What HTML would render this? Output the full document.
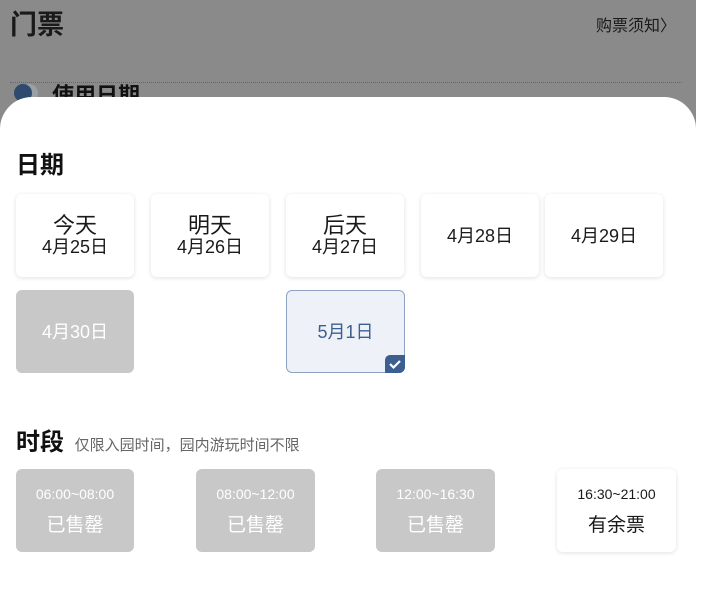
<!DOCTYPE html>
<html><head><meta charset="utf-8"><style>
*{margin:0;padding:0;box-sizing:border-box}
body{width:702px;height:592px;background:#fff;position:relative;overflow:hidden;font-family:"Liberation Sans","Noto Sans CJK SC",sans-serif}
.bg{position:absolute;left:0;top:0;width:696px;height:592px;background:#8a8a8a}
.t1{position:absolute;left:10px;top:3px;font-size:27px;font-weight:bold;color:#1a1a1a}
.t2{position:absolute;left:596px;top:12px;font-size:16px;color:#1a1a1a}
.dash{position:absolute;left:10px;top:82px;width:672px;border-top:1px dotted #5a6a7a}
.dot{position:absolute;left:14px;top:84px;width:18px;height:18px;border-radius:50%;background:#2e4a6e;box-shadow:6px 0 0 #9aa0a6}
.t3{position:absolute;left:52px;top:78px;font-size:22px;font-weight:bold;color:#111}
.sheet{position:absolute;left:0;top:97px;width:696px;height:500px;background:#fff;border-radius:32px 32px 0 0}
.h{position:absolute;left:16px;font-size:24px;font-weight:bold;color:#111}
.c{position:absolute;width:118px;height:83px;border-radius:6px;background:#fff;box-shadow:0 1px 5px rgba(0,0,0,.12);display:flex;flex-direction:column;align-items:center;justify-content:center;color:#1a1a1a;font-size:18px;line-height:20px;text-align:center}
.c .b{font-size:22px;line-height:22px}
.g{background:#c8c8c8;box-shadow:none;color:#fff}
.s{background:#eef2f8;border:1px solid #8ea3c2;color:#3d5f8f;box-shadow:none}
.chk{position:absolute;right:-1px;bottom:-1px;width:20px;height:18px;background:#3d5f8f;border-radius:5px 0 6px 0}
.sl{font-size:14px;line-height:16px;margin-bottom:14px}
.sb{font-size:19px}
</style></head><body>
<div class="bg"></div>
<div class="t1">门票</div>
<div class="t2">购票须知〉</div>
<div class="dash"></div>
<div class="dot"></div>
<div class="t3">使用日期</div>
<div class="sheet"></div>
<div class="h" style="top:145px">日期</div>
<div class="c" style="left:16px;top:194px"><span class="b">今天</span>4月25日</div>
<div class="c" style="left:151px;top:194px"><span class="b">明天</span>4月26日</div>
<div class="c" style="left:286px;top:194px"><span class="b">后天</span>4月27日</div>
<div class="c" style="left:421px;top:194px">4月28日</div>
<div class="c" style="left:545px;top:194px">4月29日</div>
<div class="c g" style="left:16px;top:290px">4月30日</div>
<div class="c s" style="left:286px;top:290px;width:119px">5月1日<div class="chk"><svg width="20" height="18" viewBox="0 0 20 18"><path d="M5 9l3.5 3.5L15 6" stroke="#fff" stroke-width="2.2" fill="none"/></svg></div></div>
<div class="h" style="top:422px">时段 <span style="font-size:15px;font-weight:normal;color:#666;margin-left:4px">仅限入园时间，园内游玩时间不限</span></div>
<div class="c g" style="left:16px;top:469px"><span class="sl">06:00~08:00</span><span class="sb">已售罄</span></div>
<div class="c g" style="left:196px;top:469px;width:119px"><span class="sl">08:00~12:00</span><span class="sb">已售罄</span></div>
<div class="c g" style="left:376px;top:469px;width:119px"><span class="sl">12:00~16:30</span><span class="sb">已售罄</span></div>
<div class="c" style="left:557px;top:469px;width:119px"><span class="sl">16:30~21:00</span><span class="sb">有余票</span></div>
</body></html>
